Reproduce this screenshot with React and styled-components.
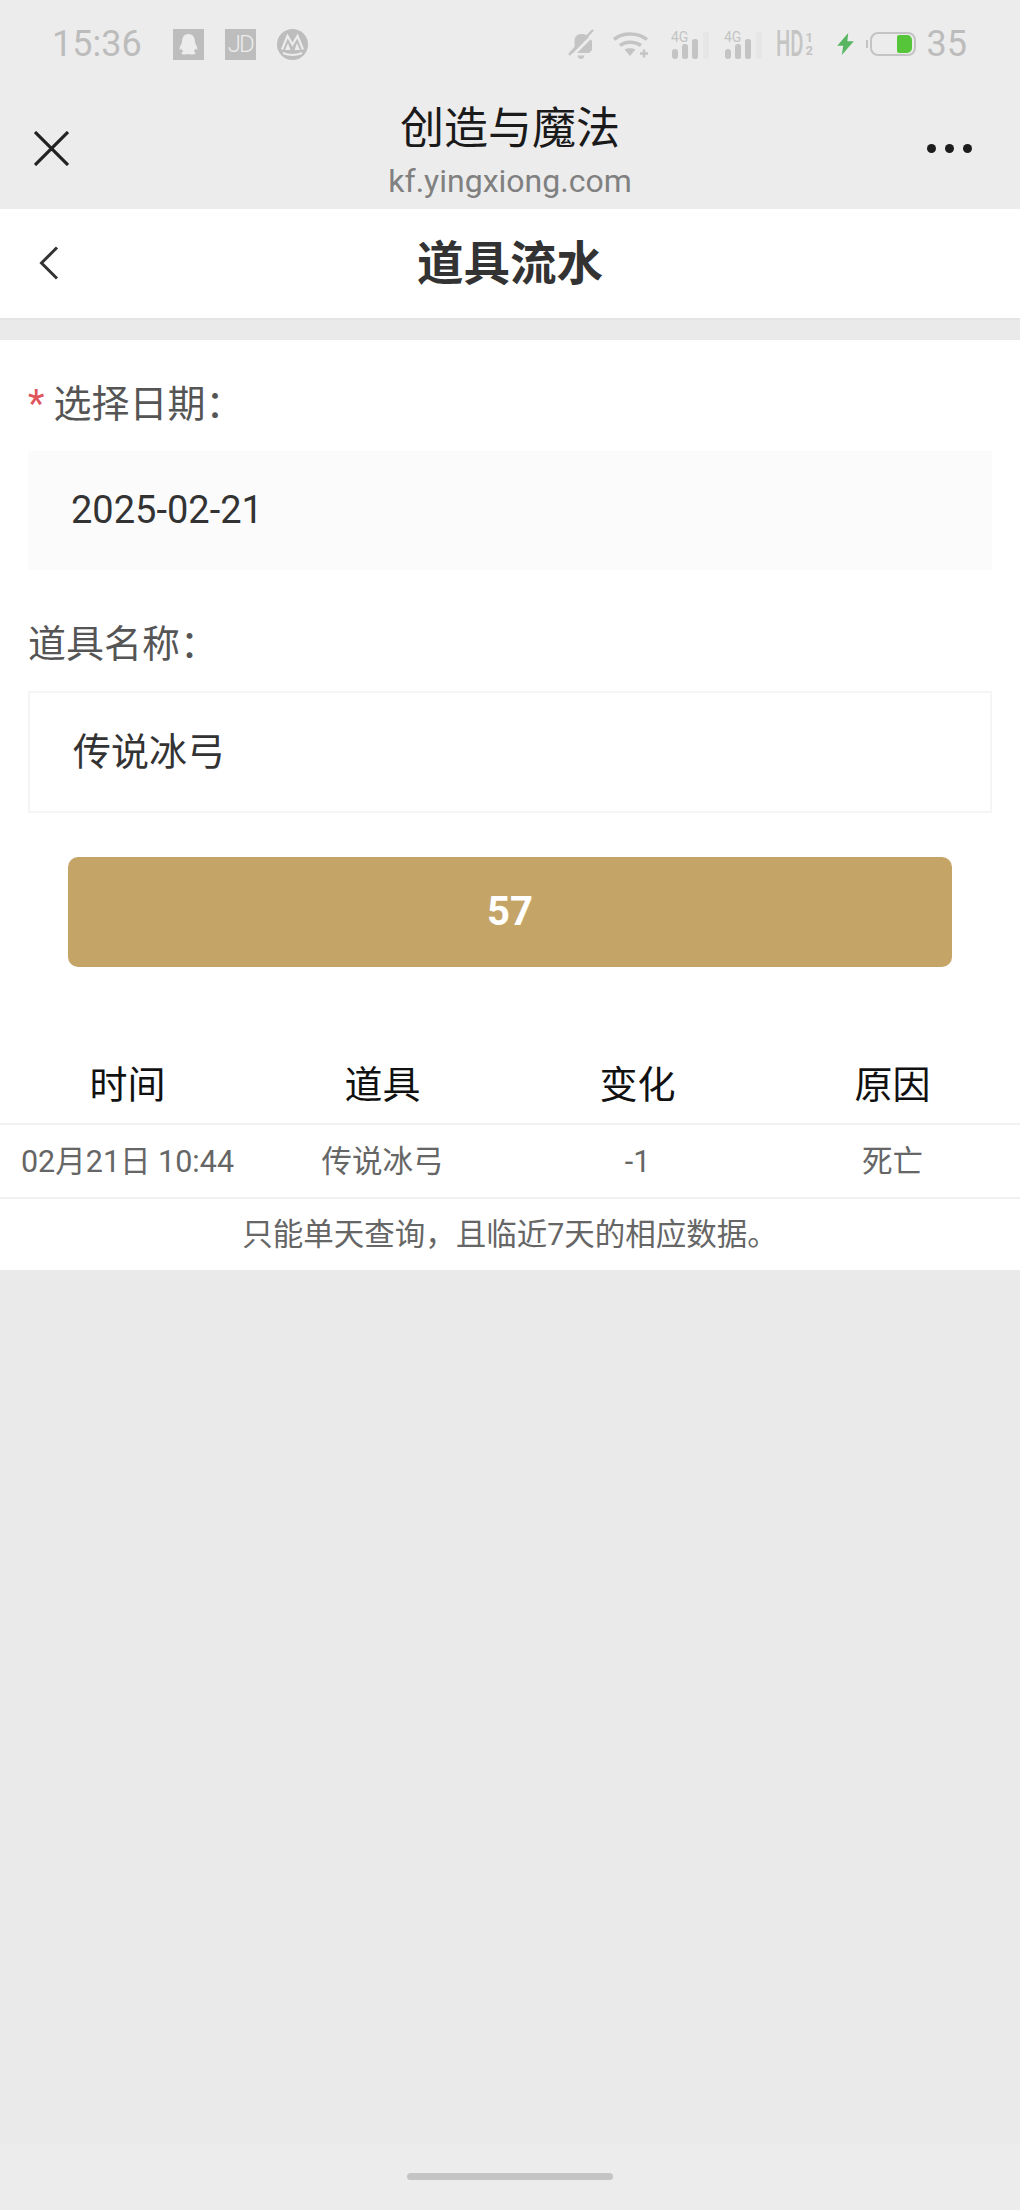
import styled, { createGlobalStyle } from 'styled-components';

const GlobalStyle = createGlobalStyle`
  html, body {
    margin: 0;
    padding: 0;
    background: #eaeaea;
  }
  * {
    box-sizing: border-box;
  }
  body {
    font-family: Roboto, "Noto Sans CJK SC", sans-serif;
  }
`;

const rows = [
    { time: '02月21日 10:44', item: '传说冰弓', change: '-1', reason: '死亡' },
];

const App = () => {
    return (
        <Page>
            <GlobalStyle />
            <Chrome>
                <StatusBar>
                    <StatusLeft>
                        <Clock>15:36</Clock>
                        <NotifyIcons>
                            <SquareIcon>
                                <svg width="31" height="31" viewBox="0 0 31 31">
                                    <path fill="#ececec" d="M15.5 5c-4.2 0-6.4 3.2-6.4 7.2 0 1-.2 2-.8 3-1 1.600-1.900 3.400-1.700 4.900.1.900.9.700 2-.7.3 1.200.9 2.200 1.700 3-1.400.6-2.100 1.400-1.800 2.200.4.900 2.400 1.200 4.400.900.900-.1 1.600-.5 2.600-.5s1.700.4 2.600.5c2 .3 4 0 4.400-.9.300-.8-.4-1.600-1.800-2.200.8-.8 1.400-1.800 1.700-3 1.100 1.400 1.900 1.600 2 .7.2-1.500-.7-3.300-1.700-4.900-.6-1-.8-2-.8-3 0-4-2.200-7.200-6.400-7.200z" />
                                </svg>
                            </SquareIcon>
                            <SquareIcon>
                                <JdText>JD</JdText>
                            </SquareIcon>
                            <svg width="31" height="31" viewBox="0 0 31 31">
                                <circle cx="15.500" cy="15.500" r="15.500" fill="#bdbdbd" />
                                <path fill="none" stroke="#ececec" strokeWidth="2.200" d="M5 20.500 10.500 7l5 8.500 5-8.500L26 20.500" />
                                <path fill="none" stroke="#ececec" strokeWidth="2" d="M6 24c6 2.500 13 2.500 19 0" />
                                <path fill="#ececec" d="M8 21l3-7 2.500 7zM17.500 21l2.500-7 3 7z" />
                            </svg>
                        </NotifyIcons>
                    </StatusLeft>
                    <StatusRight>
                        <svg width="26" height="31" viewBox="0 0 26 31">
                            <path fill="#c4c4c4" d="M13 5C9 5 6.500 8 6.500 12v6L1 24h20l3-3V12l-4-5c-2-1.400-4-2-7-2z" />
                            <path fill="#c4c4c4" d="M9.500 26.500h7c-.3 2-1.700 3.500-3.500 3.500s-3.200-1.500-3.500-3.500z" />
                            <path stroke="#ececec" strokeWidth="3" d="M3 28 26 5" />
                            <path stroke="#c4c4c4" strokeWidth="2.500" d="M1 26 25 1" />
                        </svg>
                        <WifiIcon>
                            <svg width="36" height="28" viewBox="0 0 36 28">
                                <g fill="none" stroke="#c4c4c4" strokeWidth="3.500">
                                    <path d="M1 9.500c8-7.500 24-7.500 33 0" />
                                    <path d="M7 15.500c5-4.500 15-4.500 21 0" />
                                </g>
                                <path fill="#c4c4c4" d="M11.500 19.500c3-1.800 8-1.800 11 0L17 26z" />
                                <path stroke="#c4c4c4" strokeWidth="2.500" d="M27 23.500h8M31 19.500v8" />
                            </svg>
                        </WifiIcon>
                        <SignalIcon />
                        <SignalGap />
                        <SignalIcon />
                        <HdMark>
                            <HdLetters>HD</HdLetters>
                            <Fraction>
                                <span>1</span>
                                <span>2</span>
                            </Fraction>
                        </HdMark>
                        <ChargeSlot>
                            <svg width="17" height="22" viewBox="0 0 18 24">
                                <path fill="#58b561" d="M12 0 0 14h6.500L5 24l13-15h-7z" />
                            </svg>
                        </ChargeSlot>
                        <BatteryIcon>
                            <BatteryFill />
                        </BatteryIcon>
                        <BatteryText>35</BatteryText>
                    </StatusRight>
                </StatusBar>
                <WebHeader>
                    <CloseSlot>
                        <svg width="35" height="35" viewBox="0 0 35 35">
                            <path stroke="#222" strokeWidth="3.200" d="M1 1l33 33M34 1 1 34" />
                        </svg>
                    </CloseSlot>
                    <TitleBlock>
                        <WebTitle>创造与魔法</WebTitle>
                        <WebDomain>kf.yingxiong.com</WebDomain>
                    </TitleBlock>
                    <MoreDots>
                        <Dot />
                        <Dot />
                        <Dot />
                    </MoreDots>
                </WebHeader>
            </Chrome>
            <NavBar>
                <BackButton>
                    <svg width="20" height="34" viewBox="0 0 20 34">
                        <path fill="none" stroke="#333" strokeWidth="3" d="M18 1.500 2.500 17 18 32.500" />
                    </svg>
                </BackButton>
                <NavTitle>道具流水</NavTitle>
            </NavBar>
            <Content>
                <Form>
                    <Label>
                        <Star>*</Star>选择日期：
                    </Label>
                    <DateField>2025-02-21</DateField>
                    <Label $second>道具名称：</Label>
                    <NameField>传说冰弓</NameField>
                </Form>
                <SubmitButton>57</SubmitButton>
                <HeadRow>
                    <HeadCell>时间</HeadCell>
                    <HeadCell>道具</HeadCell>
                    <HeadCell>变化</HeadCell>
                    <HeadCell>原因</HeadCell>
                </HeadRow>
                {rows.map((row) => (
                    <DataRow key={row.time}>
                        <DataCell>{row.time}</DataCell>
                        <DataCell>{row.item}</DataCell>
                        <DataCell>{row.change}</DataCell>
                        <DataCell>{row.reason}</DataCell>
                    </DataRow>
                ))}
                <Note>只能单天查询，且临近7天的相应数据。</Note>
            </Content>
            <Filler />
            <GestureBar>
                <Pill />
            </GestureBar>
        </Page>
    );
};

const SignalIcon = () => (
    <svg width="38" height="29" viewBox="0 0 38 29">
        <text x="0" y="12" fontFamily="Roboto, sans-serif" fontSize="14" fill="#c4c4c4">4G</text>
        <rect x="1" y="19" width="6" height="10" rx="3" fill="#c4c4c4" />
        <rect x="11" y="14" width="6" height="15" rx="2.500" fill="#c4c4c4" />
        <rect x="21" y="9" width="6" height="20" rx="2.500" fill="#c4c4c4" />
        <rect x="32" y="2" width="6" height="27" rx="2" fill="#e6e6e6" />
    </svg>
);

// 레이아웃
const Page = styled.div`
  width: 1020px;
  min-height: 2210px;
  display: flex;
  flex-direction: column;
  background: #eaeaea;
`;
const Chrome = styled.div`
  background: #ececec;
  height: 209px;
`;
const StatusBar = styled.div`
  height: 88px;
  padding: 0 53px 0 52px;
  display: flex;
  align-items: center;
  justify-content: space-between;
`;
const StatusLeft = styled.div`
  display: flex;
  align-items: center;
  gap: 31px;
`;
const Clock = styled.span`
  font-size: 36px;
  line-height: 40px;
  color: #bcbcbc;
`;
const NotifyIcons = styled.div`
  display: flex;
  align-items: center;
  gap: 21px;
`;
const SquareIcon = styled.div`
  width: 31px;
  height: 31px;
  background: #bdbdbd;
  display: flex;
  align-items: center;
  justify-content: center;
`;
const JdText = styled.span`
  font-size: 24px;
  font-weight: 300;
  letter-spacing: -2px;
  color: #ececec;
`;
const StatusRight = styled.div`
  display: flex;
  align-items: center;
`;
const WifiIcon = styled.div`
  display: flex;
  margin: 0 22px 0 19px;
`;
const SignalGap = styled.div`
  width: 15px;
`;
const HdMark = styled.div`
  display: flex;
  align-items: center;
  width: 43px;
  margin-left: 14px;
  color: #c4c4c4;
`;
const HdLetters = styled.span`
  width: 28px;
  font-size: 36px;
  line-height: 36px;
  font-weight: 500;
  white-space: nowrap;
  display: inline-block;
  transform: scaleX(0.56);
  transform-origin: left center;
`;
const Fraction = styled.div`
  display: flex;
  flex-direction: column;
  margin-left: 2px;
  font-size: 13px;
  line-height: 13px;
  font-weight: 700;
`;
const ChargeSlot = styled.div`
  display: flex;
  margin: 0 16px 0 18px;
`;
const BatteryIcon = styled.div`
  position: relative;
  width: 46px;
  height: 24px;
  padding: 1px 2px;
  border: 2px solid #c4c4c4;
  border-radius: 8px;
  display: flex;
  justify-content: flex-end;
  &::before {
    content: '';
    position: absolute;
    left: -6px;
    top: 6px;
    width: 2px;
    height: 8px;
    background: #c4c4c4;
  }
`;
const BatteryFill = styled.div`
  width: 15px;
  height: 100%;
  background: #57c53a;
  border-radius: 2px 5px 5px 2px;
`;
const BatteryText = styled.span`
  margin-left: 11px;
  font-size: 36px;
  line-height: 40px;
  color: #bcbcbc;
`;
const WebHeader = styled.div`
  height: 121px;
  padding: 0 34px;
  display: grid;
  grid-template-columns: 1fr auto 1fr;
`;
const CloseSlot = styled.div`
  padding-top: 43px;
`;
const TitleBlock = styled.div`
  display: flex;
  flex-direction: column;
  align-items: center;
  padding-top: 12px;
`;
const WebTitle = styled.div`
  font-size: 44px;
  line-height: 58px;
  color: #1a1a1a;
`;
const WebDomain = styled.div`
  margin-top: 3px;
  font-size: 32px;
  line-height: 40px;
  color: #808080;
`;
const MoreDots = styled.div`
  display: flex;
  justify-self: end;
  gap: 9px;
  margin: 56px 14px 0 0;
`;
const Dot = styled.span`
  width: 9px;
  height: 9px;
  border-radius: 50%;
  background: #1c1c1c;
`;
const NavBar = styled.div`
  position: relative;
  height: 111px;
  padding-bottom: 9px;
  background: #fff;
  border-bottom: 2px solid #e4e4e4;
  display: flex;
  align-items: center;
  justify-content: center;
`;
const BackButton = styled.div`
  position: absolute;
  left: 39px;
  top: 37px;
  display: flex;
`;
const NavTitle = styled.div`
  font-size: 46.500px;
  font-weight: 700;
  color: #333;
`;
const Content = styled.div`
  margin-top: 20px;
  background: #fff;
  height: 930px;
`;
const Form = styled.div`
  padding: 38px 28px 0;
`;
const Label = styled.div`
  height: 50px;
  font-size: 38px;
  line-height: 52px;
  color: #555;
  margin-top: ${(props) => (props.$second ? '48px' : '0')};
`;
const Star = styled.span`
  color: #e0555c;
  margin-right: 9px;
`;
const DateField = styled.div`
  height: 119px;
  margin-top: 23px;
  padding-left: 43px;
  background: #fbfbfb;
  font-size: 38px;
  line-height: 119px;
  color: #333;
`;
const NameField = styled.div`
  height: 122px;
  margin-top: 23px;
  padding-left: 43px;
  border: 2px solid #f5f5f5;
  font-size: 38px;
  line-height: 118px;
  color: #333;
`;
const SubmitButton = styled.div`
  height: 110px;
  margin: 44px 68px 0;
  background: #c5a567;
  border-radius: 10px;
  color: #fff;
  font-size: 40px;
  font-weight: 700;
  line-height: 110px;
  text-align: center;
`;
const HeadRow = styled.div`
  height: 79px;
  margin-top: 79px;
  display: grid;
  grid-template-columns: repeat(4, 1fr);
  border-bottom: 2px solid #f1f1f1;
`;
const HeadCell = styled.div`
  font-size: 38px;
  line-height: 79px;
  text-align: center;
  color: #111;
`;
const DataRow = styled.div`
  height: 74px;
  display: grid;
  grid-template-columns: repeat(4, 1fr);
  border-bottom: 2px solid #f1f1f1;
`;
const DataCell = styled.div`
  font-size: 30.500px;
  line-height: 73px;
  text-align: center;
  white-space: nowrap;
  color: #666;
`;
const Note = styled.div`
  height: 71px;
  font-size: 30.500px;
  line-height: 72px;
  text-align: center;
  color: #666;
`;
const Filler = styled.div`
  flex: 1;
`;
const GestureBar = styled.div`
  height: 66px;
  background: #ececec;
  display: flex;
  justify-content: center;
  padding-top: 29px;
`;
const Pill = styled.div`
  width: 206px;
  height: 7px;
  border-radius: 4px;
  background: #c4c4c4;
`;

export default App;
